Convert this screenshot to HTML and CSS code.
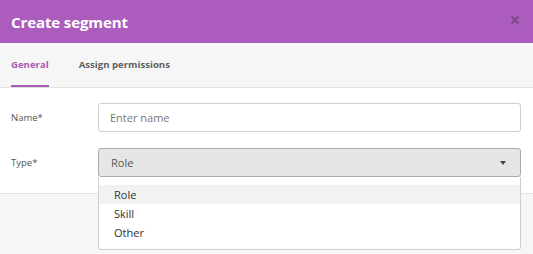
FILE: index.html
```html
<!DOCTYPE html>
<html>
<head>
<meta charset="utf-8">
<link rel="stylesheet" href="styles.css">
</head>
<body>
<div class="modal">
  <header class="head">
    <h1 class="title">Create segment</h1>
    <svg class="close" width="10" height="10" viewBox="0 0 10 10"><path d="M1.5 1.5 L8.5 8.5 M8.5 1.5 L1.5 8.5" stroke="#7c4a89" stroke-width="2.2" stroke-linecap="butt"/></svg>
  </header>
  <nav class="tabs">
    <span class="tab active">General</span>
    <span class="tab">Assign permissions</span>
  </nav>
  <div class="body">
    <div class="row">
      <label class="label">Name*</label>
      <div class="input">Enter name</div>
    </div>
    <div class="row row-type">
      <label class="label">Type*</label>
      <div class="select-wrap">
        <div class="select"><span>Role</span><span class="caret"></span></div>
        <ul class="menu">
          <li class="opt hl">Role</li>
          <li class="opt">Skill</li>
          <li class="opt">Other</li>
        </ul>
      </div>
    </div>
  </div>
  <footer class="foot"></footer>
</div>
</body>
</html>
```
FILE: styles.css
```css
* { box-sizing: border-box; }
html, body { margin: 0; padding: 0; }
body { font-family: "Open Sans", "Liberation Sans", sans-serif; background: #fff; width: 533px; height: 254px; overflow: hidden; }
.modal { display: flex; flex-direction: column; height: 254px; }
.head { height: 43px; background: #ac5cbc; display: flex; align-items: center; justify-content: space-between; padding: 0 13px 0 11px; flex: none; }
.title { margin: 0; color: #fff; font-size: 15px; font-weight: 700; letter-spacing: -0.1px; }
.close { margin-top: -4px; }
.tabs { height: 45px; background: #f6f6f6; border-bottom: 1px solid #e2e2e2; display: flex; padding-left: 11px; gap: 30px; flex: none; }
.tab { font-size: 9.6px; font-weight: 700; color: #5f5f5f; line-height: 43px; height: 44px; }
.tab.active { color: #a35db5; border-bottom: 2px solid #a35db5; }
.body { height: 105px; background: #fff; flex: none; padding: 15px 12px 0 11px; }
.row { display: flex; align-items: center; }
.row-type { margin-top: 16px; align-items: flex-start; }
.label { width: 87px; font-size: 9.5px; color: #555; flex: none; }
.row-type .label { line-height: 29px; }
.input { flex: 1; height: 29px; border: 1px solid #cfcfcf; border-radius: 3px; font-size: 11px; color: #777; padding-left: 11px; line-height: 27px; }
.select-wrap { flex: 1; position: relative; }
.select { height: 29px; background: #e6e6e6; border: 1px solid #a9a9a9; border-radius: 3px; font-size: 11px; color: #555; padding: 0 14px 0 12px; display: flex; align-items: center; justify-content: space-between; }
.caret { width: 0; height: 0; border-left: 3.5px solid transparent; border-right: 3.5px solid transparent; border-top: 4px solid #444; margin-top: 1px; }
.menu { position: absolute; left: 0; right: 0; top: 29px; margin: 0; padding: 8px 0 7px; list-style: none; background: #fff; border: 1px solid #cfcfcf; border-top: none; border-radius: 0 0 3px 3px; z-index: 2; }
.opt { height: 19px; line-height: 19px; font-size: 11px; color: #333; padding-left: 15px; }
.opt.hl { background: #f2f2f2; }
.foot { flex: 1; background: #f6f6f6; border-top: 1px solid #e4e4e4; }
```
